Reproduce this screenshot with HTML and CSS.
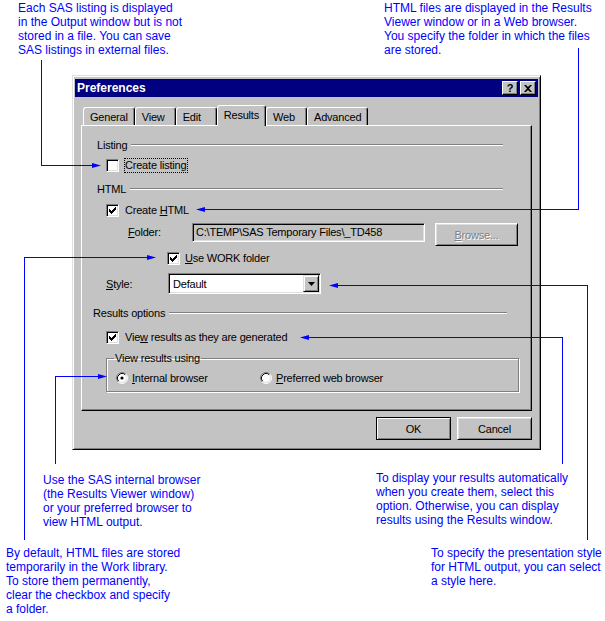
FILE: index.html
```html
<!DOCTYPE html>
<html>
<head>
<meta charset="utf-8">
<title>Preferences</title>
<link rel="stylesheet" href="styles.css">
</head>
<body>
<div class="canvas">
  <p class="note note-tl">Each SAS listing is displayed<br>in the Output window but is not<br>stored in a file. You can save<br>SAS listings in external files.</p>
  <p class="note note-tr">HTML files are displayed in the Results<br>Viewer window or in a Web browser.<br>You specify the folder in which the files<br>are stored.</p>
  <p class="note note-bli">Use the SAS internal browser<br>(the Results Viewer window)<br>or your preferred browser to<br>view HTML output.</p>
  <p class="note note-blo">By default, HTML files are stored<br>temporarily in the Work library.<br>To store them permanently,<br>clear the checkbox and specify<br>a folder.</p>
  <p class="note note-bri">To display your results automatically<br>when you create them, select this<br>option. Otherwise, you can display<br>results using the Results window.</p>
  <p class="note note-bro">To specify the presentation style<br>for HTML output, you can select<br>a style here.</p>

  <div class="dialog">
    <div class="titlebar">
      <span class="title">Preferences</span>
      <span class="tbtns">
        <span class="tbtn tbtn-help">?</span>
        <span class="tbtn"><svg width="8" height="7" viewBox="0 0 8 7"><path d="M0 0h2l2 2 2-2h2L5 3.5 8 7H6L4 5 2 7H0l3-3.5z" fill="#000"/></svg></span>
      </span>
    </div>
    <div class="tabs">
      <span class="tab">General</span>
      <span class="tab">View</span>
      <span class="tab">Edit</span>
      <span class="tab tab-active">Results</span>
      <span class="tab">Web</span>
      <span class="tab">Advanced</span>
    </div>
    <div class="panel">
      <div class="sect sect-listing"><span>Listing</span><span class="sect-line"></span></div>
      <div class="chk-row">
        <span class="box"></span>
        <span class="chk-label chk-focus">Create listing</span>
      </div>
      <div class="sect sect-html"><span>HTML</span><span class="sect-line"></span></div>
      <div class="chk-row chk-row-html">
        <span class="box"><svg width="9" height="9" viewBox="0 0 9 9"><path d="M7 1h1v1h-1zM6 2h2v1h-2zM1 3h1v1h-1zM5 3h3v1h-3zM1 4h2v1h-2zM4 4h3v1h-3zM1 5h5v1h-5zM2 6h3v1h-3zM3 7h1v1h-1z" fill="#000"/></svg></span>
        <span class="chk-label">Create <u>H</u>TML</span>
      </div>
      <div class="folder-row">
        <span class="folder-label"><u>F</u>older:</span>
        <span class="field">C:\TEMP\SAS Temporary Files\_TD458</span>
        <span class="btn btn-browse"><span class="disabled-text"><u>B</u>rowse...</span></span>
      </div>
      <div class="chk-row chk-row-work">
        <span class="box"><svg width="9" height="9" viewBox="0 0 9 9"><path d="M7 1h1v1h-1zM6 2h2v1h-2zM1 3h1v1h-1zM5 3h3v1h-3zM1 4h2v1h-2zM4 4h3v1h-3zM1 5h5v1h-5zM2 6h3v1h-3zM3 7h1v1h-1z" fill="#000"/></svg></span>
        <span class="chk-label"><u>U</u>se WORK folder</span>
      </div>
      <div class="style-row">
        <span class="style-label"><u>S</u>tyle:</span>
        <span class="combo">
          <span class="combo-text">Default</span>
          <span class="combo-btn"><svg width="7" height="4" viewBox="0 0 7 4"><path d="M0 0h7L3.5 4z" fill="#000"/></svg></span>
        </span>
      </div>
      <div class="sect sect-results"><span>Results options</span><span class="sect-line"></span></div>
      <div class="chk-row chk-row-view">
        <span class="box"><svg width="9" height="9" viewBox="0 0 9 9"><path d="M7 1h1v1h-1zM6 2h2v1h-2zM1 3h1v1h-1zM5 3h3v1h-3zM1 4h2v1h-2zM4 4h3v1h-3zM1 5h5v1h-5zM2 6h3v1h-3zM3 7h1v1h-1z" fill="#000"/></svg></span>
        <span class="chk-label">Vie<u>w</u> results as they are generated</span>
      </div>
      <fieldset class="group">
        <legend class="group-legend">View results using</legend>
        <div class="radio-row">
          <span class="radio-opt radio-opt-first">
            <svg class="radio" width="12" height="12" viewBox="0 0 12 12">
              <circle cx="6" cy="6" r="5" fill="#fff"/>
              <path d="M2.11 9.89A5.5 5.5 0 0 1 9.89 2.11" fill="none" stroke="#808080"/>
              <path d="M9.89 2.11A5.5 5.5 0 0 1 2.11 9.89" fill="none" stroke="#fff"/>
              <path d="M2.82 9.18A4.5 4.5 0 0 1 9.18 2.82" fill="none" stroke="#000"/>
              <path d="M9.18 2.82A4.5 4.5 0 0 1 2.82 9.18" fill="none" stroke="#dfdfdf"/>
              <circle cx="6" cy="6" r="1.6" fill="#000"/>
            </svg>
            <span><u>I</u>nternal browser</span>
          </span>
          <span class="radio-opt">
            <svg class="radio" width="12" height="12" viewBox="0 0 12 12">
              <circle cx="6" cy="6" r="5" fill="#fff"/>
              <path d="M2.11 9.89A5.5 5.5 0 0 1 9.89 2.11" fill="none" stroke="#808080"/>
              <path d="M9.89 2.11A5.5 5.5 0 0 1 2.11 9.89" fill="none" stroke="#fff"/>
              <path d="M2.82 9.18A4.5 4.5 0 0 1 9.18 2.82" fill="none" stroke="#000"/>
              <path d="M9.18 2.82A4.5 4.5 0 0 1 2.82 9.18" fill="none" stroke="#dfdfdf"/>
            </svg>
            <span><u>P</u>referred web browser</span>
          </span>
        </div>
      </fieldset>
    </div>
    <div class="btn-row">
      <span class="btn btn-default">OK</span>
      <span class="btn">Cancel</span>
    </div>
  </div>

  <svg class="leaders" width="605" height="621" viewBox="0 0 605 621">
    <g fill="none" stroke="#0000ff" stroke-width="1" shape-rendering="crispEdges">
      <path d="M41.5 60V165.5H94"/>
      <path d="M578.5 48V209.5H204"/>
      <path d="M24.5 540V257.5H149"/>
      <path d="M587.5 540V285.5H336"/>
      <path d="M562.5 464V337.5H307"/>
      <path d="M55.5 464V376.5H100"/>
    </g>
    <g fill="#0000ff">
      <polygon points="92,163 101,165.5 92,168"/>
      <polygon points="205,207 196,209.5 205,212"/>
      <polygon points="147,255 156,257.5 147,260"/>
      <polygon points="338,283 329,285.5 338,288"/>
      <polygon points="309,335 300,337.5 309,340"/>
      <polygon points="98,374 107,376.5 98,379"/>
    </g>
  </svg>
</div>
</body>
</html>
```

FILE: styles.css
```css
* {
  box-sizing: border-box;
}

body {
  margin: 0;
  background: #ffffff;
}

.canvas {
  position: relative;
  width: 605px;
  height: 621px;
  overflow: hidden;
  font-family: "Liberation Sans", Arial, sans-serif;
}

/* callout notes placed on the diagram canvas */
.note {
  position: absolute;
  margin: 0;
  color: #0000ff;
  font-size: 12px;
  line-height: 14px;
  white-space: nowrap;
}

.note-tl { left: 18px; top: 1px; }
.note-tr { left: 384px; top: 1px; }
.note-bli { left: 43px; top: 473px; }
.note-blo { left: 6px; top: 546px; }
.note-bri { left: 376px; top: 471px; }
.note-bro { left: 431px; top: 546px; }

.leaders {
  position: absolute;
  left: 0;
  top: 0;
  z-index: 5;
  pointer-events: none;
}

/* dialog window */
.dialog {
  position: absolute;
  left: 72px;
  top: 75px;
  width: 469px;
  height: 375px;
  background: #c3c3c3;
  border: 1px solid;
  border-color: #dfdfdf #000 #000 #dfdfdf;
  box-shadow: inset 1px 1px #fff, inset -1px -1px #808080;
  padding: 3px 2px 0 2px;
  display: flex;
  flex-direction: column;
  color: #000;
  font-size: 11px;
  letter-spacing: -0.2px;
}

.titlebar {
  height: 18px;
  background: #000080;
  display: flex;
  align-items: center;
  justify-content: space-between;
  padding: 0 2px;
}

.title {
  color: #fff;
  font-weight: bold;
  font-size: 12px;
  letter-spacing: 0;
}

.tbtns {
  display: flex;
  gap: 2px;
}

.tbtn {
  width: 16px;
  height: 14px;
  background: #c3c3c3;
  border: 1px solid;
  border-color: #fff #000 #000 #fff;
  box-shadow: inset -1px -1px #808080;
  display: flex;
  align-items: center;
  justify-content: center;
}

.tbtn-help {
  font-weight: bold;
  font-size: 11px;
  line-height: 12px;
}

/* tabs */
.tabs {
  display: flex;
  align-items: flex-end;
  height: 21px;
  margin: 8px 0 0 8px;
}

.tab {
  height: 19px;
  min-width: 41px;
  padding: 3px 6px 0;
  line-height: 13px;
  background: #c3c3c3;
  border: 1px solid;
  border-bottom: none;
  border-color: #fff #000 transparent #fff;
  border-radius: 3px 3px 0 0;
  box-shadow: inset -1px 0 #808080;
}

.tab-active {
  height: 21px;
  position: relative;
  z-index: 1;
}

/* tab page */
.panel {
  margin: -1px 0 0 6px;
  width: 451px;
  height: 286px;
  border: 1px solid;
  border-color: #fff #000 #000 #fff;
  box-shadow: inset -1px -1px #808080;
  display: flex;
  flex-direction: column;
}

.sect {
  display: flex;
  align-items: center;
  height: 14px;
  gap: 4px;
}

.sect-line {
  flex: 1;
  height: 2px;
  border-top: 1px solid #808080;
  border-bottom: 1px solid #fff;
}

.sect-listing { margin: 12px 28px 0 15px; }
.sect-html { margin: 9px 28px 0 15px; }
.sect-results { margin: 12px 24px 0 11px; }

.chk-row {
  display: flex;
  align-items: center;
  height: 15px;
  gap: 5px;
  margin: 6px 0 0 24px;
}

.chk-row-html { margin-top: 7px; }
.chk-row-work { margin: 5px 0 0 85px; gap: 4px; }
.chk-row-view { margin-top: 10px; }

.box {
  width: 13px;
  height: 13px;
  flex: none;
  background: #fff;
  border: 1px solid;
  border-color: #808080 #fff #fff #808080;
  box-shadow: inset 1px 1px #000, inset -1px -1px #dfdfdf;
  display: flex;
  align-items: center;
  justify-content: center;
}

.chk-label {
  border: 1px solid transparent;
  line-height: 13px;
  padding: 0 1px 0 0;
}

.chk-focus {
  border: 1px dotted #000;
}

.folder-row {
  display: flex;
  align-items: flex-start;
  height: 23px;
  margin: 5px 0 0 46px;
}

.folder-label {
  width: 64px;
  line-height: 19px;
}

.field {
  width: 233px;
  height: 19px;
  padding: 0 3px;
  line-height: 17px;
  border: 1px solid;
  border-color: #808080 #fff #fff #808080;
  box-shadow: inset 1px 1px #000, inset -1px -1px #dfdfdf;
  white-space: nowrap;
}

.btn {
  width: 75px;
  height: 23px;
  background: #c3c3c3;
  border: 1px solid;
  border-color: #fff #000 #000 #fff;
  box-shadow: inset 1px 1px #dfdfdf, inset -1px -1px #808080;
  display: flex;
  align-items: center;
  justify-content: center;
}

.btn-browse {
  width: 83px;
  margin-left: 10px;
}

.disabled-text {
  color: #808080;
  text-shadow: 1px 1px #fff;
}

.btn-default {
  border-color: #000;
  box-shadow: inset 1px 1px #fff, inset -1px -1px #808080;
}

.style-row {
  display: flex;
  align-items: center;
  height: 21px;
  margin: 7px 0 0 24px;
}

.style-label {
  width: 62px;
}

.combo {
  width: 153px;
  height: 21px;
  background: #fff;
  border: 1px solid;
  border-color: #808080 #fff #fff #808080;
  box-shadow: inset 1px 1px #000, inset -1px -1px #dfdfdf;
  padding: 1px 1px 1px 4px;
  display: flex;
  align-items: center;
  justify-content: space-between;
}

.combo-btn {
  width: 16px;
  height: 17px;
  background: #c3c3c3;
  border: 1px solid;
  border-color: #dfdfdf #000 #000 #dfdfdf;
  box-shadow: inset 1px 1px #fff, inset -1px -1px #808080;
  display: flex;
  align-items: center;
  justify-content: center;
}

.group {
  margin: 7px 0 0 24px;
  width: 413px;
  height: 40px;
  padding: 0 0 0 7px;
  border: 1px solid #808080;
  box-shadow: inset 1px 1px #fff, 1px 1px #fff;
  min-width: 0;
}

.group-legend {
  padding: 0 1px;
  line-height: 13px;
}

.radio-row {
  display: flex;
  align-items: center;
  height: 13px;
  margin: 6px 0 0 2px;
}

.radio-opt {
  display: flex;
  align-items: center;
  gap: 4px;
}

.radio-opt-first {
  width: 144px;
}

.radio {
  flex: none;
}

.btn-row {
  display: flex;
  justify-content: flex-end;
  gap: 6px;
  margin: 6px 6px 0 0;
}
```
